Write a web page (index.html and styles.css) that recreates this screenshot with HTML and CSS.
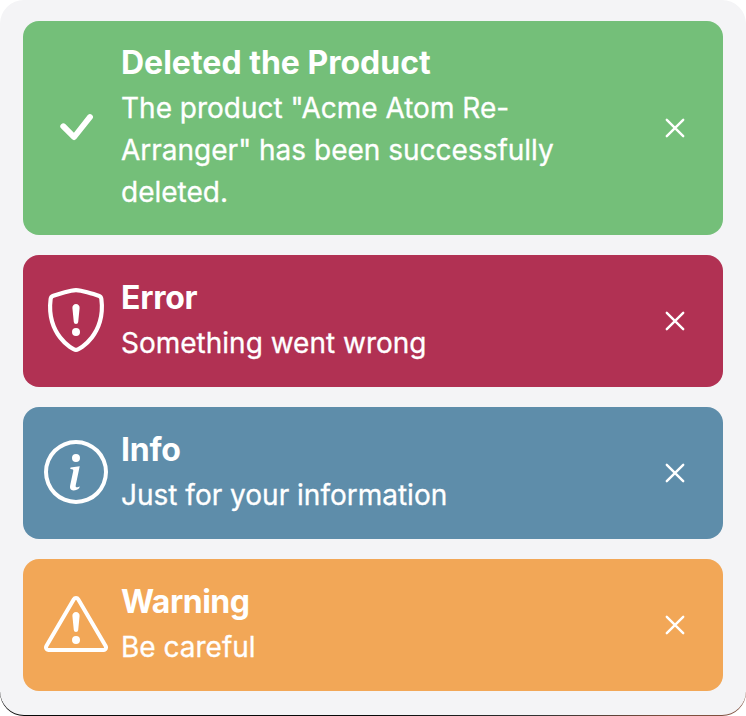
FILE: index.html
```html
<!DOCTYPE html>
<html lang="en">
<head>
<meta charset="utf-8">
<title>Notifications</title>
<link rel="stylesheet" href="styles.css">
</head>
<body>
<div class="frame">
<main class="panel">
  <section class="alert success">
    <svg class="icon" viewBox="0 0 16 16"><path d="M10.97 4.97a.75.75 0 0 1 1.07 1.05l-3.99 4.99a.75.75 0 0 1-1.08.02L4.324 8.384a.75.75 0 1 1 1.06-1.06l2.094 2.093 3.473-4.425z"/></svg>
    <div class="copy"><h2>Deleted the Product</h2><p>The product "Acme Atom Re-Arranger" has been successfully deleted.</p></div>
    <button class="close" aria-label="Close"><svg viewBox="0 0 20 20"><path d="M1.8 1.8 18.2 18.2M18.2 1.8 1.8 18.2"/></svg></button>
  </section>
  <section class="alert error">
    <svg class="icon" viewBox="0 0 16 16"><path d="M5.338 1.59a61 61 0 0 0-2.837.856.48.48 0 0 0-.328.39c-.554 4.157.726 7.19 2.253 9.188a10.7 10.7 0 0 0 2.287 2.233c.346.244.652.42.893.533q.18.085.293.118a1 1 0 0 0 .101.025 1 1 0 0 0 .1-.025q.114-.034.294-.118c.24-.113.547-.29.893-.533a10.7 10.7 0 0 0 2.287-2.233c1.527-1.997 2.807-5.031 2.253-9.188a.48.48 0 0 0-.328-.39c-.651-.213-1.75-.56-2.837-.855C9.552 1.29 8.531 1.067 8 1.067c-.53 0-1.552.223-2.662.524zM5.072.56C6.157.265 7.31 0 8 0s1.843.265 2.928.56c1.11.3 2.229.655 2.887.87a1.54 1.54 0 0 1 1.044 1.262c.596 4.477-.787 7.795-2.465 9.99a11.8 11.8 0 0 1-2.517 2.453 7 7 0 0 1-1.048.625c-.28.132-.581.24-.829.24s-.548-.108-.829-.24a7 7 0 0 1-1.048-.625 11.8 11.8 0 0 1-2.517-2.453C1.928 10.487.545 7.169 1.141 2.692A1.54 1.54 0 0 1 2.185 1.43 63 63 0 0 1 5.072.56"/><path d="M7.001 11a1 1 0 1 1 2 0 1 1 0 0 1-2 0M7.1 4.995a.905.905 0 1 1 1.8 0l-.35 3.507a.553.553 0 0 1-1.1 0z"/></svg>
    <div class="copy"><h2>Error</h2><p>Something went wrong</p></div>
    <button class="close" aria-label="Close"><svg viewBox="0 0 20 20"><path d="M1.8 1.8 18.2 18.2M18.2 1.8 1.8 18.2"/></svg></button>
  </section>
  <section class="alert info">
    <svg class="icon" viewBox="0 0 16 16"><path d="M8 15A7 7 0 1 1 8 1a7 7 0 0 1 0 14m0 1A8 8 0 1 0 8 0a8 8 0 0 0 0 16"/><path d="m8.93 6.588-2.29.287-.082.38.45.083c.294.07.352.176.288.469l-.738 3.468c-.194.897.105 1.319.808 1.319.545 0 1.178-.252 1.465-.598l.088-.416c-.2.176-.492.246-.686.246-.275 0-.375-.193-.304-.533zM9 4.5a1 1 0 1 1-2 0 1 1 0 0 1 2 0"/></svg>
    <div class="copy"><h2>Info</h2><p>Just for your information</p></div>
    <button class="close" aria-label="Close"><svg viewBox="0 0 20 20"><path d="M1.8 1.8 18.2 18.2M18.2 1.8 1.8 18.2"/></svg></button>
  </section>
  <section class="alert warning">
    <svg class="icon" viewBox="0 0 16 16"><path d="M7.938 2.016A.13.13 0 0 1 8.002 2a.13.13 0 0 1 .063.016.15.15 0 0 1 .054.057l6.857 11.667c.036.06.035.124.002.183a.2.2 0 0 1-.054.06.1.1 0 0 1-.066.017H1.146a.1.1 0 0 1-.066-.017.2.2 0 0 1-.054-.06.18.18 0 0 1 .002-.183L7.884 2.073a.15.15 0 0 1 .054-.057m1.044-.45a1.13 1.13 0 0 0-1.96 0L.165 13.233c-.457.778.091 1.767.98 1.767h13.713c.889 0 1.438-.99.98-1.767z"/><path d="M7.002 12a1 1 0 1 1 2 0 1 1 0 0 1-2 0M7.1 5.995a.905.905 0 1 1 1.8 0l-.35 3.507a.552.552 0 0 1-1.1 0z"/></svg>
    <div class="copy"><h2>Warning</h2><p>Be careful</p></div>
    <button class="close" aria-label="Close"><svg viewBox="0 0 20 20"><path d="M1.8 1.8 18.2 18.2M18.2 1.8 1.8 18.2"/></svg></button>
  </section>
</main>
</div>
</body>
</html>
```
FILE: styles.css
```css
* { box-sizing: border-box; }
body { margin: 0; background: #fff; font-family: Inter, sans-serif; color: #fff; }
.frame {
  height: 716px;
  border-radius: 24px;
  background: linear-gradient(90deg, #080808 0%, #080808 50%, #333 72%, #80503f 90%) 0 100% / 100% 24px no-repeat;
}
.panel {
  height: 715px;
  padding: 21px 23px;
  display: flex;
  flex-direction: column;
  gap: 20px;
  background: #f4f4f6;
  border-radius: 24px;
}
.alert { display: flex; align-items: center; border-radius: 16px; height: 132px; padding: 0 37px 0 21px; }
.success { height: 214px; background: #74bf79; }
.error { background: #b13153; }
.info { background: #5e8daa; }
.warning { background: #f2a757; }
.icon { width: 64px; height: 64px; margin-bottom: 2px; fill: #fff; flex: none; }
.copy { width: 470px; margin-left: 13px; padding-bottom: 4px; }
h2 { margin: 0; font-size: 32px; line-height: 48px; font-weight: 700; }
.error h2, .info h2 { letter-spacing: -0.25px; }
.warning h2 { letter-spacing: -0.5px; }
p { margin: 0; font-size: 28px; line-height: 42px; -webkit-text-stroke: 0.3px #fff; }
.close { margin-left: auto; padding: 0; border: 0; background: none; width: 22px; height: 20px; display: grid; place-items: center; }
.close svg { width: 20px; height: 20px; fill: none; stroke: #fff; stroke-width: 2.4; stroke-linecap: round; }
```
